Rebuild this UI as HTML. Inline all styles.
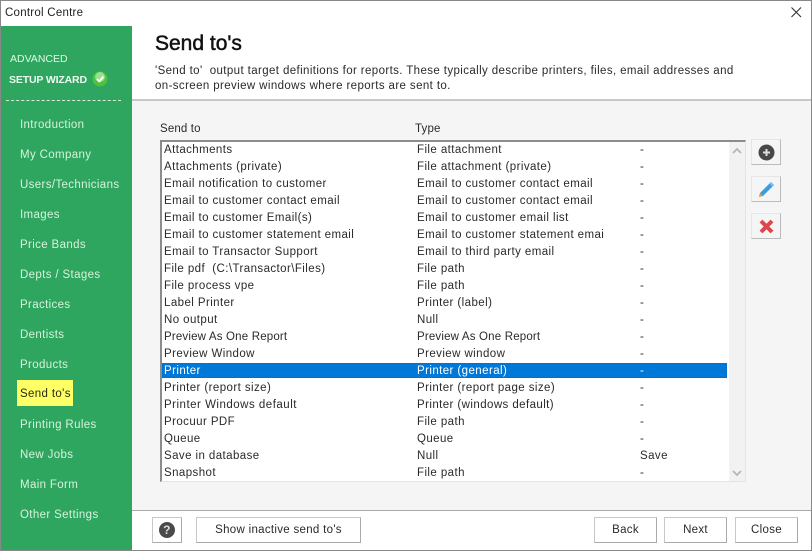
<!DOCTYPE html>
<html><head><meta charset="utf-8"><style>
html,body{margin:0;padding:0}
body{width:812px;height:551px;position:relative;overflow:hidden;background:#fff;font-family:"Liberation Sans",sans-serif;font-size:11.5px;color:#2a2a2a;letter-spacing:.25px}
.a{position:absolute;white-space:nowrap}
.n{position:absolute;left:20px;color:#d6f3dd;height:16px;line-height:16px;white-space:nowrap;margin-top:1px;letter-spacing:.36px}
.t{position:absolute;height:16px;line-height:16px;white-space:nowrap;overflow:hidden;letter-spacing:.42px}
.b{position:absolute;box-sizing:border-box;background:#fff;border:1px solid #c8c8c8;border-right-color:#aaa;border-bottom-color:#aaa;text-align:center;line-height:25px;height:26px;top:517px;color:#2a2a2a;letter-spacing:.3px}
.s{position:absolute;left:751px;width:30px;box-sizing:border-box;background:#f5f5f5;border:1px solid #e6e6e6;border-right:1px solid #bbb;border-bottom:1px solid #bbb}
</style></head><body>
<div class="a" style="left:0;top:0;width:812px;height:1px;background:#888"></div>
<div class="a" style="left:0;top:0;width:1px;height:551px;background:#888"></div>
<div class="a" style="right:0;top:0;width:1px;height:551px;background:#888"></div>
<div class="a" style="left:0;top:550px;width:812px;height:1px;background:#888"></div>
<div class="a" style="left:5px;top:5px;font-size:11.5px;line-height:16px;color:#222">Control Centre</div>
<svg class="a" style="left:790px;top:6px" width="12" height="12"><path d="M1.5 1.500L11 11M11 1.500L1.500 11" stroke="#333" stroke-width="1.1" fill="none"/></svg>

<div class="a" style="left:1px;top:26px;width:131px;height:524px;background:#2ea65f"></div>
<div class="a" style="left:10px;top:51px;color:#e4f6e8;line-height:16px;font-size:10.5px;letter-spacing:0">ADVANCED</div>
<div class="a" style="left:9px;top:72px;color:#eef9f0;line-height:16px;font-size:10.5px;font-weight:bold;letter-spacing:-.15px">SETUP WIZARD</div>
<svg class="a" style="left:92px;top:71px" width="17" height="17"><circle cx="8" cy="8" r="7.5" fill="#4cc23f"/><circle cx="8" cy="6" r="5" fill="#9ade8e"/><path d="M5 8l2.200 2.400L11.400 5.600" stroke="#fff" stroke-width="1.8" fill="none"/></svg>
<div class="a" style="left:6px;top:100px;width:115px;border-top:1px dashed #d8f0dd"></div>
<div class="n" style="top:116px">Introduction</div>
<div class="n" style="top:146px">My Company</div>
<div class="n" style="top:176px">Users/Technicians</div>
<div class="n" style="top:206px">Images</div>
<div class="n" style="top:236px">Price Bands</div>
<div class="n" style="top:266px">Depts / Stages</div>
<div class="n" style="top:296px">Practices</div>
<div class="n" style="top:326px">Dentists</div>
<div class="n" style="top:356px">Products</div>
<div class="a" style="left:17px;top:380px;width:56px;height:26px;background:#ffff66"></div>
<div class="n" style="top:385px;color:#2a2a10">Send to's</div>
<div class="n" style="top:416px">Printing Rules</div>
<div class="n" style="top:446px">New Jobs</div>
<div class="n" style="top:476px">Main Form</div>
<div class="n" style="top:506px">Other Settings</div>

<div class="a" style="left:155px;top:31px;font-size:21px;line-height:26px;color:#111;letter-spacing:0;-webkit-text-stroke:.5px #111">Send to's</div>
<div class="a" style="left:155px;top:63px;line-height:16px;letter-spacing:.39px">'Send to'&nbsp; output target definitions for reports. These typically describe printers, files, email addresses and</div>
<div class="a" style="left:155px;top:78px;line-height:16px;letter-spacing:.39px">on-screen preview windows where reports are sent to.</div>

<div class="a" style="left:132px;top:99px;width:679px;height:2px;background:#c8c8c8"></div>
<div class="a" style="left:132px;top:101px;width:679px;height:409px;background:#f5f5f5"></div>
<div class="a" style="left:132px;top:510px;width:679px;height:1px;background:#aaa"></div>

<div class="a" style="left:160px;top:121px;line-height:16px;letter-spacing:.15px">Send to</div>
<div class="a" style="left:415px;top:121px;line-height:16px;letter-spacing:.15px">Type</div>

<div class="a" style="left:160px;top:140px;width:586px;height:342px;box-sizing:border-box;background:#fff;border-top:2px solid #8c8c8c;border-left:2px solid #8c8c8c;border-right:1px solid #e4e4e4;border-bottom:1px solid #e4e4e4"></div>
<div class="a" style="left:729px;top:142px;width:16px;height:339px;background:#f2f2f2"></div>
<svg class="a" style="left:731px;top:146px" width="12" height="10"><path d="M2 7l4-4 4 4" stroke="#b5b5b5" stroke-width="1.7" fill="none"/></svg>
<svg class="a" style="left:731px;top:468px" width="12" height="10"><path d="M2 3l4 4 4-4" stroke="#b5b5b5" stroke-width="1.7" fill="none"/></svg>
<div class="a" style="left:162px;top:363px;width:565px;height:15px;background:#0078d7;outline:1px dotted #7a5020;outline-offset:-1px"></div>

<div class="t" style="left:164px;top:142px">Attachments</div><div class="t" style="left:417px;top:142px">File attachment</div><div class="t" style="left:640px;top:142px">-</div>
<div class="t" style="left:164px;top:159px">Attachments (private)</div><div class="t" style="left:417px;top:159px">File attachment (private)</div><div class="t" style="left:640px;top:159px">-</div>
<div class="t" style="left:164px;top:176px">Email notification to customer</div><div class="t" style="left:417px;top:176px">Email to customer contact email</div><div class="t" style="left:640px;top:176px">-</div>
<div class="t" style="left:164px;top:193px">Email to customer contact email</div><div class="t" style="left:417px;top:193px">Email to customer contact email</div><div class="t" style="left:640px;top:193px">-</div>
<div class="t" style="left:164px;top:210px">Email to customer Email(s)</div><div class="t" style="left:417px;top:210px">Email to customer email list</div><div class="t" style="left:640px;top:210px">-</div>
<div class="t" style="left:164px;top:227px">Email to customer statement email</div><div class="t" style="left:417px;top:227px;width:188px">Email to customer statement email</div><div class="t" style="left:640px;top:227px">-</div>
<div class="t" style="left:164px;top:244px">Email to Transactor Support</div><div class="t" style="left:417px;top:244px">Email to third party email</div><div class="t" style="left:640px;top:244px">-</div>
<div class="t" style="left:164px;top:261px">File pdf&nbsp; (C:\Transactor\Files)</div><div class="t" style="left:417px;top:261px">File path</div><div class="t" style="left:640px;top:261px">-</div>
<div class="t" style="left:164px;top:278px">File process vpe</div><div class="t" style="left:417px;top:278px">File path</div><div class="t" style="left:640px;top:278px">-</div>
<div class="t" style="left:164px;top:295px">Label Printer</div><div class="t" style="left:417px;top:295px">Printer (label)</div><div class="t" style="left:640px;top:295px">-</div>
<div class="t" style="left:164px;top:312px">No output</div><div class="t" style="left:417px;top:312px">Null</div><div class="t" style="left:640px;top:312px">-</div>
<div class="t" style="left:164px;top:329px;letter-spacing:.18px">Preview As One Report</div><div class="t" style="left:417px;top:329px;letter-spacing:.18px">Preview As One Report</div><div class="t" style="left:640px;top:329px">-</div>
<div class="t" style="left:164px;top:346px">Preview Window</div><div class="t" style="left:417px;top:346px">Preview window</div><div class="t" style="left:640px;top:346px">-</div>
<div class="t" style="left:164px;top:363px;color:#fff">Printer</div><div class="t" style="left:417px;top:363px;color:#fff">Printer (general)</div><div class="t" style="left:640px;top:363px;color:#fff">-</div>
<div class="t" style="left:164px;top:380px">Printer (report size)</div><div class="t" style="left:417px;top:380px">Printer (report page size)</div><div class="t" style="left:640px;top:380px">-</div>
<div class="t" style="left:164px;top:397px;letter-spacing:.5px">Printer Windows default</div><div class="t" style="left:417px;top:397px">Printer (windows default)</div><div class="t" style="left:640px;top:397px">-</div>
<div class="t" style="left:164px;top:414px">Procuur PDF</div><div class="t" style="left:417px;top:414px">File path</div><div class="t" style="left:640px;top:414px">-</div>
<div class="t" style="left:164px;top:431px">Queue</div><div class="t" style="left:417px;top:431px">Queue</div><div class="t" style="left:640px;top:431px">-</div>
<div class="t" style="left:164px;top:448px">Save in database</div><div class="t" style="left:417px;top:448px">Null</div><div class="t" style="left:640px;top:448px">Save</div>
<div class="t" style="left:164px;top:465px">Snapshot</div><div class="t" style="left:417px;top:465px">File path</div><div class="t" style="left:640px;top:465px">-</div>

<div class="s" style="top:139px;height:26px"><svg width="28" height="24" style="display:block"><circle cx="14.500" cy="12.500" r="8" fill="#484848"/><path d="M11 12.500h7M14.500 9v7" stroke="#ddd" stroke-width="2"/></svg></div>
<div class="s" style="top:176px;height:26px"><svg width="28" height="24" style="display:block"><path d="M8 16L19 5l3 3L11 19l-4 1z" fill="#3d9be0"/><path d="M19 5l3 3-1.500 1.500-3-3z" fill="#7cc2f2"/><path d="M8 16l3 3-4 1z" fill="#e0a030"/></svg></div>
<div class="s" style="top:213px;height:26px"><svg width="28" height="24" style="display:block"><path d="M9 7l5.500 5.500M20 7l-5.500 5.500M9 18l5.500-5.500M20 18l-5.500-5.500" stroke="#d8484c" stroke-width="4"/></svg></div>

<div class="b" style="left:152px;width:30px"><svg width="28" height="24" style="display:block"><circle cx="14" cy="12" r="8" fill="#4a4a4a"/><text x="14" y="16" font-family="Liberation Sans" font-size="12" font-weight="bold" fill="#ddd" text-anchor="middle">?</text></svg></div>
<div class="b" style="left:196px;width:165px">Show inactive send to's</div>
<div class="b" style="left:594px;width:63px">Back</div>
<div class="b" style="left:664px;width:63px">Next</div>
<div class="b" style="left:735px;width:63px">Close</div>
</body></html>
